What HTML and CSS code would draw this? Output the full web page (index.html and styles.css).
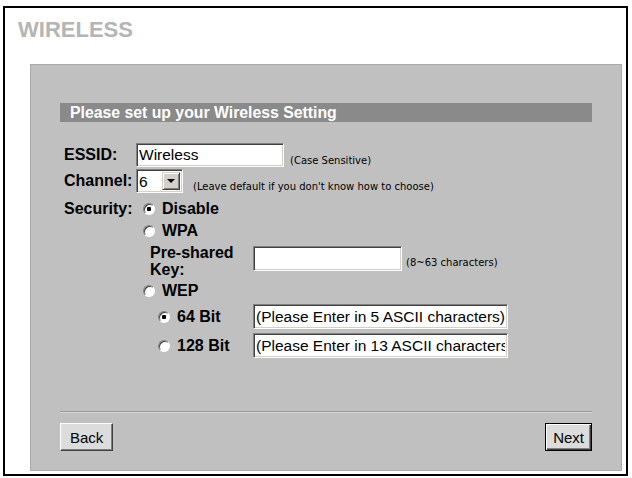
FILE: index.html
```html
<!DOCTYPE html>
<html>
<head>
    <link rel="stylesheet" href="styles.css">
</head>
<body>
    <div class="frame">
        <h1 class="page-title">WIRELESS</h1>
        <div class="panel">
            <div class="panel-header">Please set up your Wireless Setting</div>
            <form class="settings">
                <!-- ESSID -->
                <div class="row row-essid">
                    <label class="row-label" for="essid">ESSID:</label>
                    <input type="text" id="essid" class="text-field essid-field" value="Wireless">
                    <span class="hint hint-essid">(Case Sensitive)</span>
                </div>

                <!-- Channel -->
                <div class="row row-channel">
                    <label class="row-label" for="channel">Channel:</label>
                    <div class="dropdown">
                        <select id="channel">
                            <option>1</option>
                            <option>2</option>
                            <option>3</option>
                            <option>4</option>
                            <option>5</option>
                            <option selected>6</option>
                            <option>7</option>
                            <option>8</option>
                            <option>9</option>
                            <option>10</option>
                            <option>11</option>
                        </select>
                        <span class="dropdown-button"><span class="arrow"></span></span>
                    </div>
                    <span class="hint hint-channel">(Leave default if you don't know how to choose)</span>
                </div>

                <!-- Security -->
                <div class="row row-security">
                    <span class="row-label">Security:</span>
                    <div class="options">
                        <label class="option"><input type="radio" name="security" checked>Disable</label>
                        <label class="option"><input type="radio" name="security">WPA</label>

                        <div class="psk-row">
                            <label class="psk-label" for="psk">Pre-shared<br>Key:</label>
                            <input type="text" id="psk" class="text-field psk-field">
                            <span class="hint hint-psk">(8~63 characters)</span>
                        </div>

                        <label class="option"><input type="radio" name="security">WEP</label>

                        <div class="wep-row">
                            <label class="option wep-option"><input type="radio" name="wep" checked>64 Bit</label>
                            <input type="text" class="text-field wep-field" value="(Please Enter in 5 ASCII characters)">
                        </div>
                        <div class="wep-row">
                            <label class="option wep-option"><input type="radio" name="wep">128 Bit</label>
                            <input type="text" class="text-field wep-field" value="(Please Enter in 13 ASCII characters)">
                        </div>
                    </div>
                </div>
            </form>

            <div class="divider"></div>
            <div class="buttons">
                <button type="button" class="btn">Back</button>
                <button type="submit" class="btn btn-default">Next</button>
            </div>
        </div>
    </div>
</body>
</html>
```

FILE: styles.css
```css
body {
    margin: 0;
    background-color: #fff;
    font-family: "Liberation Sans", Arial, sans-serif;
    color: #000;
}

.frame {
    box-sizing: border-box;
    width: 625px;
    height: 470px;
    margin: 6px 0 0 3px;
    border: 2px solid #000;
    display: flex;
    flex-direction: column;
}

.page-title {
    margin: 0 0 21px 0;
    padding: 9px 0 0 13px;
    font-size: 22px;
    line-height: 26px;
    font-weight: bold;
    color: #b5b5b5;
}

.panel {
    flex: 1;
    margin: 0 4px 3px 25px;
    padding: 38px 29px 19px 29px;
    background-color: #c0c0c0;
    border: 1px solid #aaa;
    display: flex;
    flex-direction: column;
}

.panel-header {
    height: 19px;
    line-height: 19px;
    padding-left: 10px;
    background-color: #8a8a8a;
    color: #fff;
    font-size: 15.8px;
    font-weight: bold;
}

.settings {
    margin: 21px 0 0 4px;
    font-size: 16px;
    font-weight: bold;
}

.row {
    display: flex;
    align-items: center;
}

.row-label {
    width: 72px;
    flex-shrink: 0;
}

.row-channel {
    margin-top: 2px;
}

.row-security {
    margin-top: 5px;
    align-items: flex-start;
}

.row-security .row-label {
    line-height: 22px;
}

/* text inputs, windows classic look */
.text-field {
    box-sizing: border-box;
    height: 24px;
    margin: 0;
    padding: 0 2px;
    border: 1px solid;
    border-color: #808080 #fff #fff #808080;
    box-shadow: inset 1px 1px #404040, inset -1px -1px #d4d0c8;
    background: #fff;
    font-family: "Liberation Sans", Arial, sans-serif;
    font-size: 15.5px;
    color: #000;
    outline: none;
}

.essid-field {
    width: 148px;
}

.hint {
    font-family: "DejaVu Sans", Verdana, sans-serif;
    font-size: 10px;
    font-weight: normal;
    line-height: 12px;
    align-self: flex-end;
}

.hint-essid {
    margin-left: 6px;
}

.hint-channel {
    margin-left: 10px;
}

.hint-psk {
    align-self: flex-start;
    margin: 15px 0 0 4px;
}

/* channel dropdown */
.dropdown {
    box-sizing: border-box;
    display: flex;
    width: 47px;
    height: 24px;
    padding: 2px;
    border: 1px solid;
    border-color: #808080 #fff #fff #808080;
    box-shadow: inset 1px 1px #404040, inset -1px -1px #d4d0c8;
    background: #fff;
}

.dropdown select {
    flex: 1;
    min-width: 0;
    appearance: none;
    -webkit-appearance: none;
    border: none;
    background: transparent;
    padding: 0;
    font-family: "Liberation Sans", Arial, sans-serif;
    font-size: 15.5px;
    color: #000;
    outline: none;
}

.dropdown-button {
    box-sizing: border-box;
    width: 18px;
    display: flex;
    align-items: center;
    justify-content: center;
    background: #d4d0c8;
    border: 1px solid;
    border-color: #d4d0c8 #404040 #404040 #d4d0c8;
    box-shadow: inset 1px 1px #fff, inset -1px -1px #808080;
}

.arrow {
    width: 0;
    height: 0;
    border-left: 4px solid transparent;
    border-right: 4px solid transparent;
    border-top: 4px solid #000;
}

/* security options */
.options {
    display: flex;
    flex-direction: column;
}

.option {
    display: flex;
    align-items: center;
    height: 22px;
    padding-left: 7px;
}

.option input[type="radio"] {
    appearance: none;
    -webkit-appearance: none;
    box-sizing: border-box;
    width: 12px;
    height: 12px;
    margin: 0 7px 0 0;
    border: 1px solid;
    border-color: #808080 #fff #fff #808080;
    border-radius: 50%;
    background: #fff;
    box-shadow: inset 1px 1px #404040;
}

.option input[type="radio"]:checked {
    background: radial-gradient(circle, #000 0 2px, #fff 2.5px);
}

.psk-row {
    display: flex;
    height: 38px;
    padding-left: 14px;
}

.psk-label {
    width: 103px;
    padding-top: 2px;
    line-height: 17px;
}

.psk-field {
    width: 149px;
    height: 25px;
    margin-top: 4px;
}

.wep-row {
    display: flex;
    align-items: center;
    height: 29px;
    padding-left: 15px;
}

.wep-row:first-of-type {
    margin-top: 2px;
}

.wep-option {
    width: 102px;
    box-sizing: border-box;
}

.wep-field {
    width: 255px;
    height: 25px;
}

/* footer */
.divider {
    margin-top: auto;
    border-top: 1px solid #999;
    border-bottom: 1px solid #d6d6d6;
}

.buttons {
    display: flex;
    justify-content: space-between;
    margin-top: 10px;
}

.btn {
    box-sizing: border-box;
    height: 28px;
    padding: 0 9px;
    background: #dcdcdc;
    border: 1px solid;
    border-color: #fff #404040 #404040 #fff;
    box-shadow: inset -1px -1px #808080;
    font-family: "Liberation Sans", Arial, sans-serif;
    font-size: 15px;
    color: #000;
}

.btn-default {
    padding: 0 7px;
    border-color: #000;
    box-shadow: inset 1px 1px #fff, inset -1px -1px #404040, inset -2px -2px #808080;
}
```
